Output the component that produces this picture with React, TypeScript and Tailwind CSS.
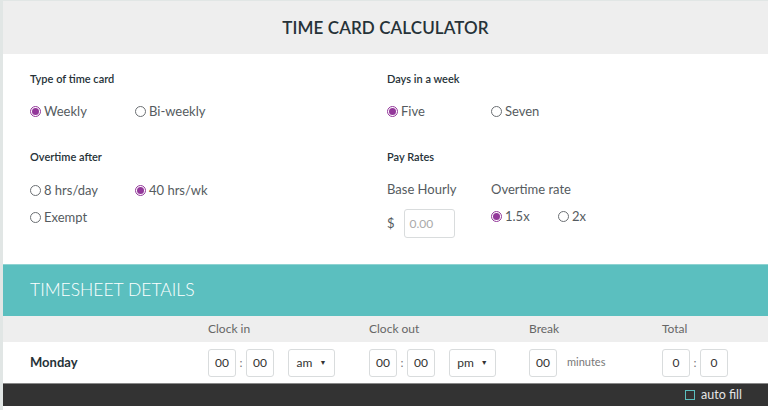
import React from "react";

function Radio({ label, checked }: { label: string; checked?: boolean }) {
  return (
    <label className="flex items-center gap-[3px] text-[13px] text-[#555b60]">
      {checked ? (
        <span className="flex h-[11px] w-[11px] items-center justify-center rounded-full border border-[#93379a] bg-white">
          <span className="h-[7px] w-[7px] rounded-full bg-[#93379a]" />
        </span>
      ) : (
        <span className="h-[11px] w-[11px] rounded-full border border-[#6b6f73] bg-white" />
      )}
      <span>{label}</span>
    </label>
  );
}

function Box({ value, w = "w-[28px]" }: { value: string; w?: string }) {
  return (
    <div className={`flex h-[28px] ${w} items-center justify-center rounded-[3px] border border-[#d9dcdd] bg-white text-[12px] text-[#333]`}>
      {value}
    </div>
  );
}

function Select({ value }: { value: string }) {
  return (
    <div className="flex h-[28px] w-[47px] items-center justify-center gap-[7px] rounded-[3px] border border-[#d9dcdd] bg-white text-[12px] text-[#333]">
      <span>{value}</span>
      <span className="text-[7px] leading-none">▼</span>
    </div>
  );
}

function Colon() {
  return <span className="w-[10px] text-center text-[12px] text-[#777]">:</span>;
}

export default function App() {
  return (
    <div className="h-[410px] w-[768px] overflow-hidden bg-white font-['Lato',sans-serif]">
      <div className="border-l-[3px] border-t border-[#e1e6e5]">
        {/* Header */}
        <div className="flex h-[53px] items-center justify-center bg-[#eeeeee]">
          <h1 className="text-[17px] font-semibold tracking-[0.1px] text-[#263238]">TIME CARD CALCULATOR</h1>
        </div>

        {/* Options */}
        <div className="grid h-[210px] grid-cols-[357px_1fr] pl-[27px] pt-[17px]">
          <div>
            <p className="text-[11px] font-semibold text-[#263238]">Type of time card</p>
            <div className="mt-[14px] flex">
              <div className="w-[105px]"><Radio label="Weekly" checked /></div>
              <Radio label="Bi-weekly" />
            </div>
            <p className="mt-[28px] text-[11px] font-semibold text-[#263238]">Overtime after</p>
            <div className="mt-[15px] flex">
              <div className="w-[105px]"><Radio label="8 hrs/day" /></div>
              <Radio label="40 hrs/wk" checked />
            </div>
            <div className="mt-[8px]"><Radio label="Exempt" /></div>
          </div>
          <div>
            <p className="text-[11px] font-semibold text-[#263238]">Days in a week</p>
            <div className="mt-[14px] flex">
              <div className="w-[104px]"><Radio label="Five" checked /></div>
              <Radio label="Seven" />
            </div>
            <p className="mt-[28px] text-[11px] font-semibold text-[#263238]">Pay Rates</p>
            <div className="mt-[14px] flex">
              <div className="w-[104px]">
                <p className="text-[13px] text-[#555b60]">Base Hourly</p>
                <div className="mt-[10px] flex items-center gap-[9px]">
                  <span className="text-[13px] text-[#555b60]">$</span>
                  <div className="flex h-[29px] w-[51px] items-center rounded-[3px] border border-[#d9dcdd] px-[5px] text-[12px] text-[#aaa]">0.00</div>
                </div>
              </div>
              <div>
                <p className="text-[13px] text-[#555b60]">Overtime rate</p>
                <div className="mt-[8px] flex">
                  <div className="w-[67px]"><Radio label="1.5x" checked /></div>
                  <Radio label="2x" />
                </div>
              </div>
            </div>
          </div>
        </div>

        {/* Timesheet band */}
        <div className="flex h-[52px] items-center border-t border-[#8fd3d2] bg-[#5bbfbf] pl-[27px]">
          <h2 className="text-[17.5px] font-light text-white">TIMESHEET DETAILS</h2>
        </div>

        {/* Column headers */}
        <div className="flex h-[26px] items-center bg-[#eeeeee] text-[12px] text-[#666]">
          <span className="ml-[205px] w-[161px]">Clock in</span>
          <span className="w-[160px]">Clock out</span>
          <span className="w-[133px]">Break</span>
          <span>Total</span>
        </div>

        {/* Monday row */}
        <div className="flex h-[41px] items-center">
          <span className="w-[205px] pl-[27px] text-[13px] font-bold text-[#263238]">Monday</span>
          <div className="flex w-[161px] items-center">
            <Box value="00" />
            <Colon />
            <Box value="00" />
            <div className="ml-[14px]"><Select value="am" /></div>
          </div>
          <div className="flex w-[160px] items-center">
            <Box value="00" />
            <Colon />
            <Box value="00" />
            <div className="ml-[14px]"><Select value="pm" /></div>
          </div>
          <div className="flex w-[133px] items-center gap-[10px]">
            <Box value="00" />
            <span className="text-[11px] text-[#777]">minutes</span>
          </div>
          <div className="flex items-center">
            <Box value="0" />
            <Colon />
            <Box value="0" />
          </div>
        </div>

        {/* Auto fill bar */}
        <div className="flex h-[23px] items-center justify-end border-t border-[#888] bg-[#333333] pr-[26px]">
          <label className="flex items-center gap-[6px] text-[12.5px] text-[#e5e5e5]">
            <span className="h-[10px] w-[10px] border border-[#5bbfbf]" />
            auto fill
          </label>
        </div>
        <div className="h-[10px]" />
      </div>
    </div>
  );
}
